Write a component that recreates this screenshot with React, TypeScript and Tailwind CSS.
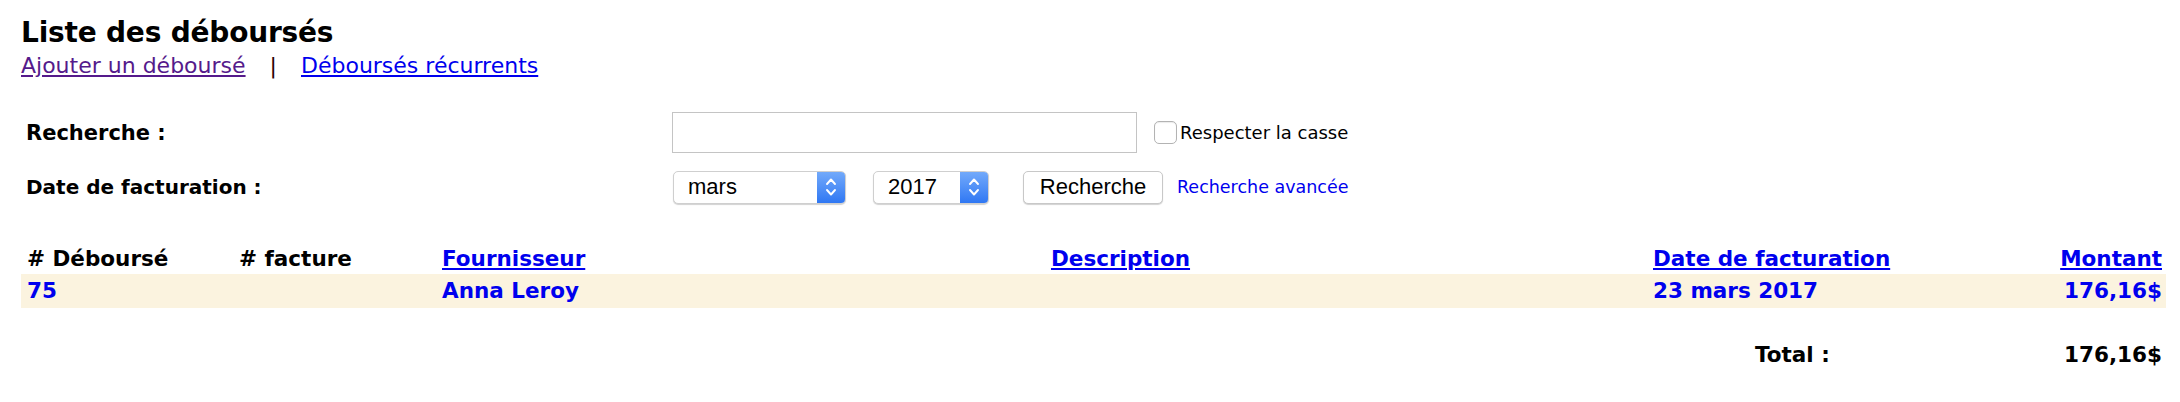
import React from "react";

function Stepper() {
  return (
    <svg width="14" height="24" viewBox="0 0 14 24" fill="none" stroke="white" strokeWidth="1.9" strokeLinecap="round" strokeLinejoin="round">
      <path d="M3 9 L7 4.5 L11 9" />
      <path d="M3 15 L7 19.5 L11 15" />
    </svg>
  );
}

function FakeSelect({ value, width }: { value: string; width: string }) {
  return (
    <div
      className={`${width} h-[33px] flex items-stretch rounded-[5px] border border-[#cfcfcf] bg-white shadow-[0_1px_1px_rgba(0,0,0,0.18)] overflow-hidden`}
    >
      <div className="flex-1 flex items-center pl-[14px] font-['Liberation_Sans',Arial,sans-serif] text-[22px] text-black leading-none">
        {value}
      </div>
      <div className="w-[28px] flex items-center justify-center bg-gradient-to-b from-[#72a9fa] to-[#2f77f3]">
        <Stepper />
      </div>
    </div>
  );
}

export default function App() {
  const blue = "text-[#0000ee]";
  return (
    <div className="w-[2180px] h-[402px] bg-white font-['DejaVu_Sans',Verdana,sans-serif] text-black">
      <div className="pl-[21px] pt-[17px]">
        <h1 className="text-[28px] leading-[32px] font-bold tracking-[-0.2px]">Liste des déboursés</h1>
        <div className="mt-[4px] text-[22px] leading-[26px] flex items-baseline">
          <a href="#" className="text-[#551a8b] underline">Ajouter un déboursé</a>
          <span className="mx-[24px] text-[#2a0000]">|</span>
          <a href="#" className={`${blue} underline`}>Déboursés récurrents</a>
        </div>

        {/* Search form */}
        <div className="mt-[33px]">
          <div className="flex items-center h-[41px]">
            <div className="w-[651px] pl-[5px] font-bold text-[21px] leading-[24px]">Recherche :</div>
            <input
              type="text"
              className="w-[465px] h-[41px] border border-[#c4c4c4] bg-white outline-none"
            />
            <div className="ml-[17px] flex items-center">
              <div className="w-[23px] h-[23px] rounded-[5px] border border-[#b3b3b3] bg-white shadow-[inset_0_1px_1px_rgba(0,0,0,0.08)]" />
              <span className="ml-[3px] text-[18px] leading-[22px]">Respecter la casse</span>
            </div>
          </div>
          <div className="flex items-center h-[34px] mt-[17px]">
            <div className="w-[651px] pl-[5px] font-bold text-[20px] leading-[24px]">Date de facturation :</div>
            <div className="ml-[1px]">
              <FakeSelect value="mars" width="w-[173px]" />
            </div>
            <div className="ml-[27px]">
              <FakeSelect value="2017" width="w-[116px]" />
            </div>
            <button className="ml-[34px] w-[140px] h-[33px] rounded-[5px] border border-[#c8c8c8] bg-white shadow-[0_1px_1px_rgba(0,0,0,0.18)] font-['Liberation_Sans',Arial,sans-serif] text-[22px] leading-none text-black">
              Recherche
            </button>
            <a href="#" className={`ml-[14px] ${blue} text-[17.5px] leading-[22px]`}>Recherche avancée</a>
          </div>
        </div>

        {/* Table */}
        <table className="mt-[40px] table-fixed border-collapse w-[2145px] text-[21.5px] leading-[26px] font-bold">
          <colgroup>
            <col className="w-[213px]" />
            <col className="w-[203px]" />
            <col className="w-[156px]" />
            <col className="w-[1055px]" />
            <col className="w-[407px]" />
            <col className="w-[111px]" />
          </colgroup>
          <thead>
            <tr>
              <th className="text-left pl-[6px] pt-[2px] pb-[2px] font-bold whitespace-nowrap">
                # Déboursé
              </th>
              <th className="text-left pl-[5px] pt-[2px] pb-[2px] font-bold whitespace-nowrap"># facture</th>
              <th className="text-left pl-[5px] pt-[2px] pb-[2px] font-bold whitespace-nowrap">
                <a href="#" className={`${blue} underline`}>Fournisseur</a>
              </th>
              <th className="text-center pt-[2px] pb-[2px] font-bold whitespace-nowrap">
                <a href="#" className={`${blue} underline`}>Description</a>
              </th>
              <th className="text-left pl-[5px] pt-[2px] pb-[2px] font-bold whitespace-nowrap">
                <a href="#" className={`${blue} underline`}>Date de facturation</a>
              </th>
              <th className="text-right pr-[4px] pt-[2px] pb-[2px] font-bold whitespace-nowrap">
                <a href="#" className={`${blue} underline`}>Montant</a>
              </th>
            </tr>
          </thead>
          <tbody>
            <tr className="bg-[#fbf3df]">
              <td className={`pl-[6px] py-[4px] ${blue}`}>75</td>
              <td className="pl-[5px] py-[4px]"></td>
              <td className={`pl-[5px] py-[4px] whitespace-nowrap ${blue}`}>Anna Leroy</td>
              <td className="py-[4px]"></td>
              <td className={`pl-[5px] py-[4px] whitespace-nowrap ${blue}`}>23 mars 2017</td>
              <td className={`pr-[4px] py-[4px] text-right whitespace-nowrap ${blue}`}>176,16$</td>
            </tr>
            <tr>
              <td colSpan={6} className="h-[30px]"></td>
            </tr>
            <tr>
              <td className="py-[4px]"></td>
              <td className="py-[4px]"></td>
              <td className="py-[4px]"></td>
              <td className="py-[4px]"></td>
              <td className="pl-[107px] py-[4px] whitespace-nowrap">Total :</td>
              <td className="pr-[4px] py-[4px] text-right whitespace-nowrap">176,16$</td>
            </tr>
          </tbody>
        </table>
      </div>
    </div>
  );
}
